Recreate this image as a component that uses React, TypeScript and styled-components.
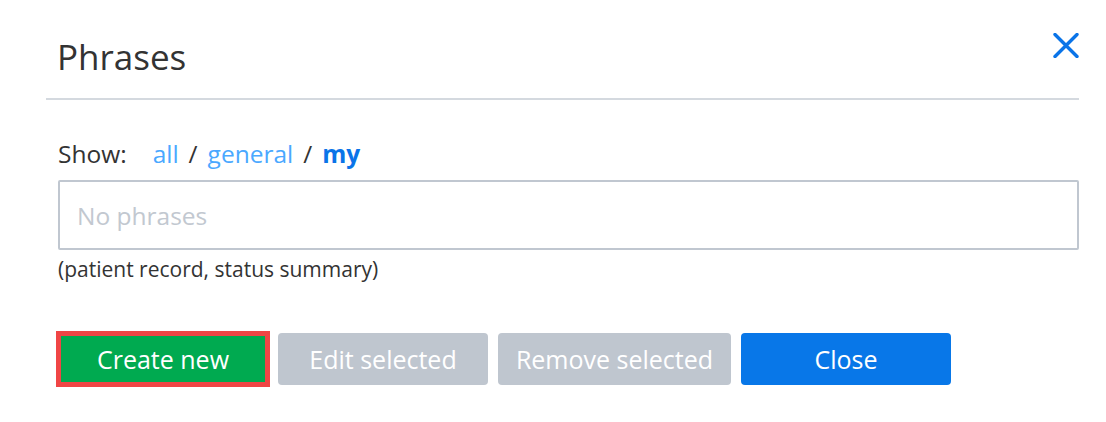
import styled, { createGlobalStyle } from 'styled-components'

const GlobalStyle = createGlobalStyle`
  body {
    margin: 0;
    background: #ffffff;
    font-family: "Open Sans", "Noto Sans", sans-serif;
    color: #333333;
  }
`

const App = () => {
  return (
    <>
      <GlobalStyle />
      <Dialog>
        <Header>
          <Title>Phrases</Title>
          <CloseIcon aria-label="Close">
            <svg width="26" height="25" viewBox="0 0 26 25">
              <path d="M2 1.5 L24 23.5 M24 1.5 L2 23.5" stroke="#0a74e8" strokeWidth="3.4" strokeLinecap="round" />
            </svg>
          </CloseIcon>
        </Header>
        <Body>
          <Filter>
            <FilterLabel>Show:</FilterLabel>
            <FilterLink>all</FilterLink>
            <Slash>/</Slash>
            <FilterLink>general</FilterLink>
            <Slash>/</Slash>
            <FilterLink active>my</FilterLink>
          </Filter>
          <PhraseList>
            <Placeholder>No phrases</Placeholder>
          </PhraseList>
          <Hint>(patient record, status summary)</Hint>
          <Actions>
            <Button variant="create" focused>Create new</Button>
            <Button variant="disabled">Edit selected</Button>
            <Button variant="disabled" wide>Remove selected</Button>
            <Button variant="primary">Close</Button>
          </Actions>
        </Body>
      </Dialog>
    </>
  )
}

export default App

const Dialog = styled.div`
  width: 1106px;
  height: 422px;
  box-sizing: border-box;
  padding: 0 27px 0 46px;
`
const Header = styled.div`
  display: flex;
  justify-content: space-between;
  align-items: flex-start;
  height: 98px;
  padding: 0 0 0 11px;
  border-bottom: 2px solid #d4d9df;
`
const Title = styled.h2`
  margin: 32px 0 0;
  font-size: 35px;
  font-weight: 400;
  line-height: 50px;
  color: #333333;
`
const CloseIcon = styled.div`
  display: flex;
  margin-top: 33px;
`
const Body = styled.div`
  display: flex;
  flex-direction: column;
  padding-left: 12px;
`
const Filter = styled.div`
  display: flex;
  align-items: baseline;
  margin-top: 38px;
  font-size: 24.5px;
  line-height: 32px;
`
const FilterLabel = styled.span`
  margin-right: 26px;
  color: #333333;
`
const FilterLink = styled.a<{ active?: boolean }>`
  color: ${p => (p.active ? '#0a74e8' : '#4aa8ff')};
  font-weight: ${p => (p.active ? 700 : 400)};
  cursor: pointer;
`
const Slash = styled.span`
  margin: 0 10px;
  color: #333333;
`
const PhraseList = styled.div`
  display: flex;
  align-items: center;
  margin-top: 10px;
  height: 70px;
  box-sizing: border-box;
  border: 2px solid #c0c7d0;
  border-radius: 2px;
  padding: 0 17px;
`
const Placeholder = styled.span`
  font-size: 24.5px;
  color: #c2c8d0;
`
const Hint = styled.div`
  margin-top: 5px;
  font-size: 21px;
  line-height: 28px;
  color: #333333;
`
const Actions = styled.div`
  display: flex;
  gap: 10px;
  margin-top: 50px;
`
const Button = styled.button<{ variant: 'create' | 'disabled' | 'primary'; focused?: boolean; wide?: boolean }>`
  width: ${p => (p.wide ? '233px' : '210px')};
  height: 52px;
  box-sizing: border-box;
  border: ${p => (p.focused ? '3px solid #f04545' : 'none')};
  border-radius: ${p => (p.focused ? '0' : '4px')};
  box-shadow: ${p => (p.focused ? '0 0 0 2px #f04545' : 'none')};
  background: ${p =>
    p.variant === 'create' ? '#00aa50' : p.variant === 'primary' ? '#0877e8' : '#bfc6cf'};
  color: #ffffff;
  font-family: "Open Sans", "Noto Sans", sans-serif;
  font-size: 25px;
  padding: 0;
  cursor: pointer;
`
